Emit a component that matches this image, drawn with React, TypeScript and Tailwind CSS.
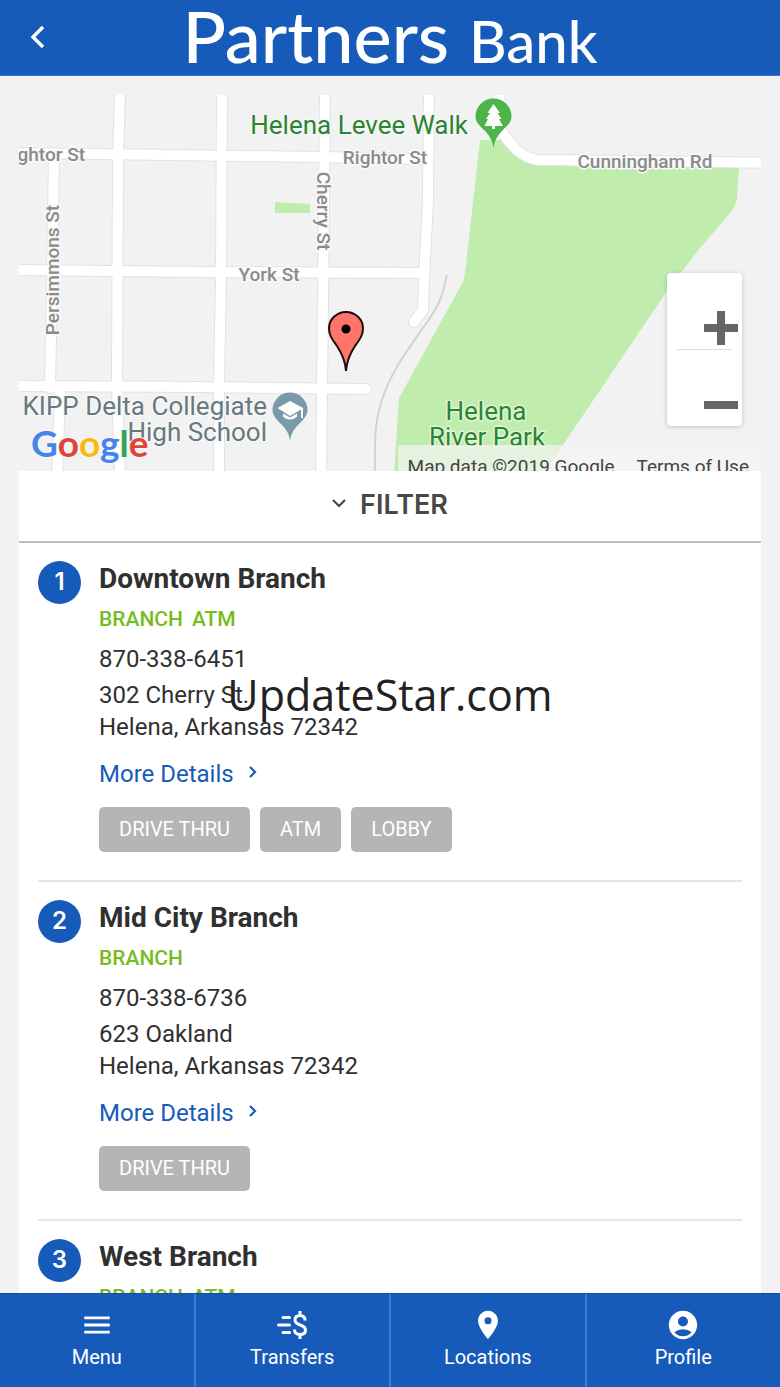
import { MdAccountCircle, MdLocationOn, MdMenu } from "react-icons/md";

type Branch = {
  name: string;
  types: string[];
  phone?: string;
  address?: string[];
  services?: string[];
};

const branches: Branch[] = [
  {
    name: "Downtown Branch",
    types: ["BRANCH", "ATM"],
    phone: "870-338-6451",
    address: ["302 Cherry St.", "Helena, Arkansas 72342"],
    services: ["DRIVE THRU", "ATM", "LOBBY"],
  },
  {
    name: "Mid City Branch",
    types: ["BRANCH"],
    phone: "870-338-6736",
    address: ["623 Oakland", "Helena, Arkansas 72342"],
    services: ["DRIVE THRU"],
  },
  { name: "West Branch", types: ["BRANCH", "ATM"] },
];

const roads = [
  "M54 155L51 335L50 388",
  "M60 390L57 480",
  "M120 90L118 160L117 380L120 480",
  "M222 90L221 280L219 380L219 480",
  "M325 90L323 300L321 480",
  "M429 90L428 200L424 280L423 310L414 322",
  "M10 153L100 154L320 157L427 159",
  "M10 270L200 272L423 273",
  "M10 386L200 387L366 389",
  "M499 90L501 130C511 146 522 158 538 160L640 161L770 163",
];

const Header = () => {
  return (
    <header className="relative flex h-[76px] shrink-0 items-center justify-center border-b border-[#3b78cc] bg-[#165bb9] text-white">
      <button className="absolute left-7 flex h-12 w-5 items-center" aria-label="Back">
        <svg viewBox="0 0 20 26" className="h-[26px] w-5" fill="none">
          <path d="M15 2L5 12L15 22" stroke="currentColor" strokeWidth="3.4" />
        </svg>
      </button>
      <div className="flex items-baseline gap-5 font-[Lato] leading-[76px] font-medium whitespace-nowrap">
        <span className="text-[72px]">Partners</span>
        <span className="text-[58px]">Bank</span>
      </div>
    </header>
  );
};

const MapView = () => {
  return (
    <div className="relative h-[376px] overflow-hidden bg-[#f2f2f2]">
      <svg
        viewBox="19 95 742 376"
        preserveAspectRatio="xMidYMid slice"
        className="h-full w-full font-[Roboto]"
        fill="none"
      >
        {/* parks */}
        <path
          d="M480 140H503L530 162L739 167L737 200L732 211L700 248L667 291L563 445L543 475H394L399 398L464 280L466 265Z"
          fill="#c0ecae"
        />
        <path d="M275 202L310 204V213H275Z" fill="#c0ecae" />
        {/* railway */}
        <path
          d="M447 275C442 300 436 310 425 325C408 350 390 372 381 403C374 425 375 445 375 475"
          stroke="#d3d3d3"
          strokeWidth="2"
        />
        {/* roads */}
        <g stroke="#e2e2e2" strokeWidth="12" strokeLinecap="round" strokeLinejoin="round">
          {roads.map((d) => (
            <path key={d} d={d} />
          ))}
        </g>
        <g stroke="#fff" strokeWidth="10" strokeLinecap="round" strokeLinejoin="round">
          {roads.map((d) => (
            <path key={d} d={d} />
          ))}
        </g>
        {/* street labels */}
        <g
          fill="#8a8a8a"
          stroke="#f9f9f9"
          strokeWidth="3"
          strokeLinejoin="round"
          paintOrder="stroke"
          fontSize="19"
          fontWeight="500"
        >
          <text x="85" y="161" textAnchor="end">ghtor St</text>
          <text x="385" y="164" textAnchor="middle">Rightor St</text>
          <text x="269" y="281" textAnchor="middle">York St</text>
          <text x="645" y="168" textAnchor="middle">Cunningham Rd</text>
          <text transform="translate(59 270) rotate(-90)" textAnchor="middle">Persimmons St</text>
          <text transform="translate(317 211) rotate(90)" textAnchor="middle">Cherry St</text>
        </g>
        {/* places */}
        <g strokeWidth="3" strokeLinejoin="round" paintOrder="stroke" fontSize="26">
          <text x="468" y="134" textAnchor="end" fill="#2b8432" stroke="#f7f7f7">Helena Levee Walk</text>
          <g fill="#2b8432" stroke="#dff5d5" textAnchor="middle">
            <text x="486" y="420">Helena</text>
            <text x="487" y="446">River Park</text>
          </g>
          <g fill="#68787f" stroke="#f7f7f7" textAnchor="end">
            <text x="267" y="415">KIPP Delta Collegiate</text>
            <text x="267" y="441">High School</text>
          </g>
        </g>
        {/* park pin */}
        <path
          d="M493.500 148C492 139 489 135 484 130C479 125 475.500 122 475.500 116.500A18 18 0 0 1 511.500 116.500C511.500 122 508 125 503 130C498 135 495 139 493.500 148Z"
          fill="#4db548"
        />
        <path
          d="M493.500 104L500 113H497.500L501.500 119H499L503 126H495V129H492V126H484.500L488 119H486L490 113H487.500Z"
          fill="#fff"
        />
        {/* school pin */}
        <path
          d="M290 441C289 433 286 429 281 424C276 419 272.500 415 272.500 410A17.500 17.500 0 0 1 307.500 410C307.500 415 304 419 299 424C294 429 291 433 290 441Z"
          fill="#799aaa"
        />
        <path
          d="M277.500 408L290 401L303 408V418H301V409.500L290 416ZM283 413.500L290 417.500L297 413.500V416.500C295 418.500 293 419.500 290 419.500C287 419.500 285 418.500 283 416.500Z"
          fill="#fff"
        />
        {/* branch marker */}
        <path
          d="M346 371C345.500 363 343.500 356 337 346C332 339 329 335 329 328.500A17 16.500 0 0 1 363 328.500C363 335 360 339 355 346C348.500 356 346.500 363 346 371Z"
          fill="#fe7569"
          stroke="#1c0d0b"
          strokeWidth="2"
        />
        <circle cx="346" cy="329" r="4.500" fill="#000" />
        {/* map provider */}
        <text
          x="31"
          y="457"
          fontFamily="Lato"
          fontSize="37"
          fontWeight="700"
          stroke="#f7f7f7"
          strokeWidth="2"
          paintOrder="stroke"
        >
          <tspan fill="#4583ee">G</tspan>
          <tspan fill="#e04438">o</tspan>
          <tspan fill="#f5ba18">o</tspan>
          <tspan fill="#4583ee">g</tspan>
          <tspan fill="#35a456">l</tspan>
          <tspan fill="#e04438">e</tspan>
        </text>
      </svg>
      <div className="absolute right-0 bottom-0 flex h-[26px] gap-[22px] bg-[#f5f5f5]/70 pt-3 pr-3 pl-[10px] font-[Roboto] text-[19px] leading-[20px] whitespace-nowrap text-[#444]">
        <span>Map data ©2019 Google</span>
        <a href="#terms">Terms of Use</a>
      </div>
      <div className="absolute right-[19px] bottom-[45px] flex w-[75px] flex-col rounded-sm bg-white px-1 shadow-[0_1px_5px_rgba(0,0,0,0.2)]">
        <button className="flex h-[76px] items-end justify-end pb-1" aria-label="Zoom in">
          <svg viewBox="0 0 34 34" className="h-[34px] w-[34px]">
            <path d="M13 0h8v13h13v8H21v13h-8V21H0v-8h13z" fill="#666" />
          </svg>
        </button>
        <div className="mx-[6px] h-px bg-[#dedede]" />
        <button className="flex h-[76px] items-end justify-end pb-1" aria-label="Zoom out">
          <svg viewBox="0 0 34 34" className="h-[34px] w-[34px]">
            <path d="M0 13h34v8H0z" fill="#666" />
          </svg>
        </button>
      </div>
    </div>
  );
};

const BranchItem = ({ branch, number }: { branch: Branch; number: number }) => {
  return (
    <li className="mx-[19px] flex gap-[18px] border-b-2 border-[#e4e4e4] pt-[17px] pb-7">
      <div className="mt-px flex h-[43px] w-[43px] shrink-0 items-center justify-center rounded-full bg-[#165bb9] pb-[2px] font-[Inter] text-[24px] font-semibold text-white">
        {number}
      </div>
      <div className="flex flex-col items-start">
        <h2 className="text-[28px] leading-[38px] font-bold">{branch.name}</h2>
        <div className="mt-[6px] flex gap-[9px] text-[21px] leading-[30px] font-medium text-[#75bc21]">
          {branch.types.map((type) => (
            <span key={type}>{type}</span>
          ))}
        </div>
        {branch.phone && <p className="mt-[10px] leading-[30px]">{branch.phone}</p>}
        {branch.address && (
          <address className="mt-[5px] leading-[32px] not-italic">
            {branch.address.map((line) => (
              <div key={line}>{line}</div>
            ))}
          </address>
        )}
        {branch.services && (
          <>
            <a href="#details" className="mt-4 flex items-center gap-[14px] leading-[30px] text-[#165bb9]">
              More Details
              <svg viewBox="0 0 10 14" className="mb-1 h-[14px] w-[10px]" fill="none">
                <path d="M2 2L7 7L2 12" stroke="currentColor" strokeWidth="2.2" />
              </svg>
            </a>
            <div className="mt-[18px] flex gap-[10px]">
              {branch.services.map((service) => (
                <span
                  key={service}
                  className="rounded-[5px] bg-[#b5b5b5] px-5 text-[20px] leading-[45px] text-white"
                >
                  {service}
                </span>
              ))}
            </div>
          </>
        )}
      </div>
    </li>
  );
};

const TransferIcon = () => {
  return (
    <svg viewBox="0 0 34 34" className="h-[34px] w-[34px]" fill="none" stroke="currentColor" strokeWidth="3">
      <path d="M8 9.500H14.500M3.500 17H14.500M8 24.500H14.500" strokeLinecap="round" />
      <path d="M30 12.500C30 9 28 7.500 25 7.500C22 7.500 20 9 20 12C20 18.500 30.500 15.500 30.500 22C30.500 25 28.500 26.500 25 26.500C21.500 26.500 19.500 25 19.500 21.500M25 3V7.500M25 26.500V31" />
    </svg>
  );
};

const BottomNav = () => {
  const items = [
    { label: "Menu", icon: <MdMenu className="text-[34px]" /> },
    { label: "Transfers", icon: <TransferIcon /> },
    { label: "Locations", icon: <MdLocationOn className="text-[34px]" /> },
    { label: "Profile", icon: <MdAccountCircle className="text-[34px]" /> },
  ];
  return (
    <nav className="flex shrink-0 border-t border-[#12509f] bg-[#165bb9] text-[20px] text-white">
      {items.map((item) => (
        <a
          key={item.label}
          href={`#${item.label.toLowerCase()}`}
          className="flex flex-1 flex-col items-center border-l-2 border-[#3b7bcd] pt-[14px] pb-[15px] first:border-l-0"
        >
          {item.icon}
          <span className="leading-[30px]">{item.label}</span>
        </a>
      ))}
    </nav>
  );
};

export default function App() {
  return (
    <div className="relative flex h-screen flex-col overflow-hidden bg-[#f2f2f2] font-[Roboto] text-[24px] text-[#303030]">
      <Header />
      <main className="min-h-0 flex-1 overflow-y-auto px-[19px] pt-[19px] [scrollbar-width:none]">
        <MapView />
        <div className="min-h-full bg-white">
          <button className="flex h-[72px] w-full items-center justify-center gap-[14px] border-b-2 border-[#bdbdbd] pb-[2px] font-[Inter] text-[27px] font-semibold text-[#484848]">
            <svg viewBox="0 0 14 10" className="mb-1 h-[10px] w-[14px]" fill="none">
              <path d="M1 2L7 8L13 2" stroke="currentColor" strokeWidth="2.2" />
            </svg>
            FILTER
          </button>
          <ul>
            {branches.map((branch, i) => (
              <BranchItem key={branch.name} branch={branch} number={i + 1} />
            ))}
          </ul>
        </div>
      </main>
      <BottomNav />
      {/* watermark */}
      <div className="pointer-events-none absolute inset-0 flex items-center justify-center pt-1 font-['Open_Sans'] text-[43px] text-[#222]">
        UpdateStar.com
      </div>
    </div>
  );
}
